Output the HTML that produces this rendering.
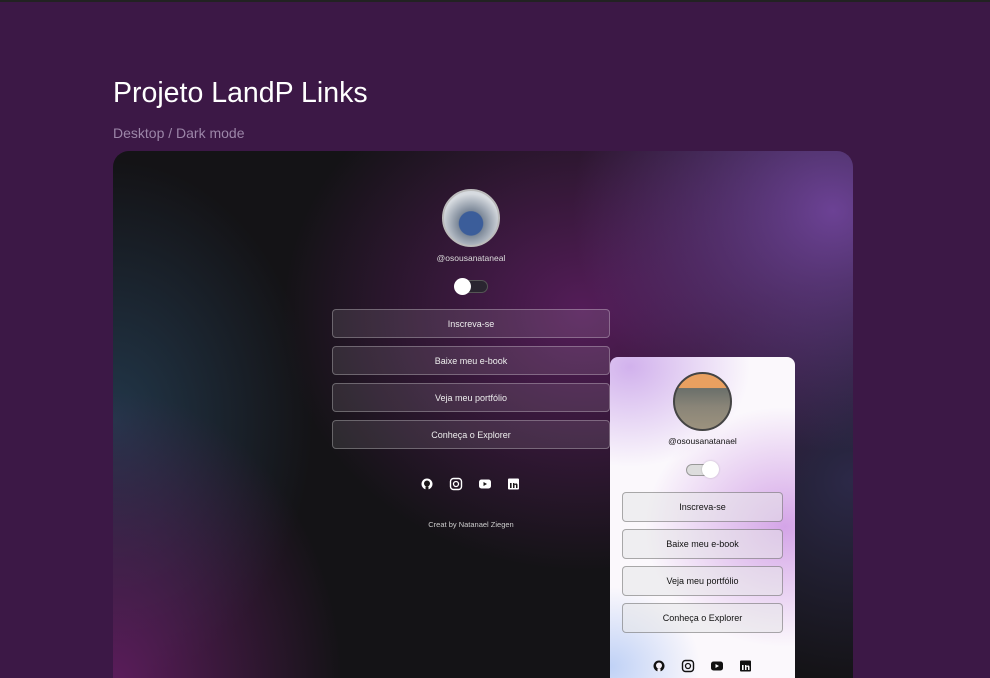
<!DOCTYPE html>
<html><head><meta charset="utf-8"><style>
*{margin:0;padding:0;box-sizing:border-box}
html,body{width:990px;height:678px;overflow:hidden}
body{background:#3c1846;font-family:"Liberation Sans",sans-serif;position:relative}
.top{position:absolute;left:0;top:0;width:990px;height:2px;background:#222}
h1{position:absolute;left:113px;top:77px;font-weight:400;font-size:28.5px;color:#fff}
.sub{position:absolute;left:113px;top:125px;font-size:14px;color:#9c86a8}
.card{position:absolute;left:113px;top:151px;width:740px;height:527px;border-radius:16px 16px 0 0;overflow:hidden;
background:
radial-gradient(ellipse 260px 240px at 720px 60px,rgba(112,68,155,.95),rgba(112,68,155,0) 100%),
radial-gradient(ellipse 300px 260px at 470px 160px,rgba(95,30,100,.85),rgba(95,30,100,0) 100%),
radial-gradient(ellipse 230px 300px at 0px 540px,rgba(100,30,100,.9),rgba(100,30,100,0) 100%),
radial-gradient(ellipse 200px 260px at 0px 270px,rgba(38,66,90,.75),rgba(38,66,90,0) 100%),
radial-gradient(ellipse 200px 200px at 740px 330px,rgba(60,55,105,.6),rgba(60,55,105,0) 100%),
#141316}
.av{position:absolute;border-radius:50%;border:2px solid #bbb;overflow:hidden}
.t{position:absolute;text-align:center;font-size:8.5px}
.btn{position:absolute;border-radius:4px;display:flex;align-items:center;justify-content:center;font-size:9px}
.dk{left:219px;width:278px;height:29px;border:1px solid rgba(255,255,255,.28);background:rgba(255,255,255,.1);color:#eee}
.mob{position:absolute;left:610px;top:357px;width:185px;height:321px;border-radius:8px 8px 0 0;overflow:hidden;
background:
radial-gradient(ellipse 120px 100px at 20px 10px,rgba(205,170,235,.9),rgba(205,170,235,0)),
radial-gradient(ellipse 140px 120px at 175px 170px,rgba(210,160,230,.95),rgba(210,160,230,0)),
radial-gradient(ellipse 90px 80px at 0px 310px,rgba(185,205,245,.9),rgba(185,205,245,0)),
#fbf8fc}
.lt{left:12px;width:161px;height:30px;border:1px solid rgba(0,0,0,.3);background:rgba(230,230,232,.55);color:#111}
svg{position:absolute}
</style></head><body>
<div class="top"></div>
<h1>Projeto LandP Links</h1>
<div class="sub">Desktop / Dark mode</div>
<div class="card">
 <div class="av" style="left:329px;top:38px;width:58px;height:58px;background:radial-gradient(circle at 50% 60%,#3b5d9a 0 28%,#7c8898 30%,#d7dbe0 70%)"></div>
 <div class="t" style="left:258px;width:200px;top:102px;color:#ddd">@osousanataneal</div>
 <div style="position:absolute;left:341px;top:129px;width:34px;height:13px;border-radius:7px;border:1px solid #555;background:#2a2530"></div>
 <div style="position:absolute;left:341px;top:127px;width:17px;height:17px;border-radius:50%;background:#fff"></div>
 <div class="btn dk" style="top:158px">Inscreva-se</div>
 <div class="btn dk" style="top:195px">Baixe meu e-book</div>
 <div class="btn dk" style="top:232px">Veja meu portfólio</div>
 <div class="btn dk" style="top:269px">Conheça o Explorer</div>
 <svg width="120" height="14" style="left:308px;top:326px" viewBox="0 0 120 14">
  <circle cx="6" cy="7" r="5.5" fill="#fff"/><circle cx="6" cy="6.5" r="3" fill="#1a1718"/><path d="M4.5 9.5v3h3v-3z" fill="#1a1718"/>
  <rect x="29.5" y="1.5" width="11" height="11" rx="3" fill="none" stroke="#fff" stroke-width="1.4"/><circle cx="35" cy="7" r="2.5" fill="none" stroke="#fff" stroke-width="1.3"/>
  <rect x="58" y="2.5" width="12" height="9" rx="2.5" fill="#fff"/><path d="M62.5 5l3.5 2-3.5 2z" fill="#1a1718"/>
  <rect x="87" y="1.5" width="11" height="11" rx="1" fill="#fff"/><path d="M89 6h1.6v5H89zM92 6h1.5v5H92zM93.5 7.5c1-1.5 3-1.5 3 .5v3h-1.5V8.5c0-1-1.5-1-1.5 0z" fill="#1a1718"/>
 </svg>
 <div class="t" style="left:258px;width:200px;top:369px;color:#ccc;font-size:7.5px">Creat by Natanael Ziegen</div>
</div>
<div class="mob">
 <div class="av" style="left:63px;top:15px;width:59px;height:59px;border-color:#444;background:linear-gradient(#e9a060 0 25%,#6a6f6a 26%,#8a8578 60%,#9c927e)"></div>
 <div class="t" style="left:0;width:185px;top:79px;color:#111">@osousanatanael</div>
 <div style="position:absolute;left:76px;top:107px;width:30px;height:12px;border-radius:6px;border:1px solid #999;background:#ddd"></div>
 <div style="position:absolute;left:92px;top:104px;width:17px;height:17px;border-radius:50%;background:#fff;box-shadow:0 0 2px rgba(0,0,0,.2)"></div>
 <div class="btn lt" style="top:135px">Inscreva-se</div>
 <div class="btn lt" style="top:172px">Baixe meu e-book</div>
 <div class="btn lt" style="top:209px">Veja meu portfólio</div>
 <div class="btn lt" style="top:246px">Conheça o Explorer</div>
 <svg width="120" height="14" style="left:43px;top:302px" viewBox="0 0 120 14">
  <circle cx="6" cy="7" r="5.5" fill="#111"/><circle cx="6" cy="6.5" r="3" fill="#f5f0f7"/><path d="M4.5 9.5v3h3v-3z" fill="#f5f0f7"/>
  <rect x="29.5" y="1.5" width="11" height="11" rx="3" fill="none" stroke="#111" stroke-width="1.4"/><circle cx="35" cy="7" r="2.5" fill="none" stroke="#111" stroke-width="1.3"/>
  <rect x="58" y="2.5" width="12" height="9" rx="2.5" fill="#111"/><path d="M62.5 5l3.5 2-3.5 2z" fill="#fff"/>
  <rect x="87" y="1.5" width="11" height="11" rx="1" fill="#111"/><path d="M89 6h1.6v5H89zM92 6h1.5v5H92zM93.5 7.5c1-1.5 3-1.5 3 .5v3h-1.5V8.5c0-1-1.5-1-1.5 0z" fill="#fff"/>
 </svg>
</div>
</body></html>
